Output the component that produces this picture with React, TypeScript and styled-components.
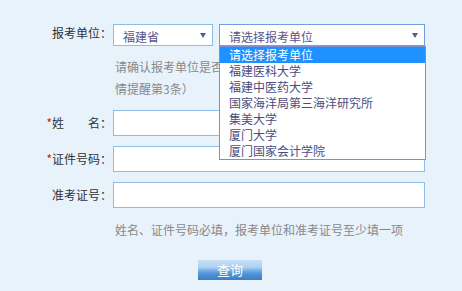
import React from "react";
import styled, { createGlobalStyle } from "styled-components";

const provinces = ["福建省"];
const units = [
  "请选择报考单位",
  "福建医科大学",
  "福建中医药大学",
  "国家海洋局第三海洋研究所",
  "集美大学",
  "厦门大学",
  "厦门国家会计学院",
];

const App = () => {
  return (
    <>
      <GlobalStyle />
      <Form>
        <Row>
          <Label>报考单位：</Label>
          <Field>
            <SelectGroup>
              <SelectBox width={100}>
                <span>{provinces[0]}</span>
                <Arrow />
              </SelectBox>
              <SelectBox width={206} focused>
                <span>{units[0]}</span>
                <Arrow />
                <DropList>
                  {units.map((u, i) => (
                    <DropItem key={u} active={i === 0}>
                      {u}
                    </DropItem>
                  ))}
                </DropList>
              </SelectBox>
            </SelectGroup>
          </Field>
        </Row>

        <HintRow>
          <Hint>
            请确认报考单位是否正确（如有疑问请查看温馨提示详
            <br />
            情提醒第3条）
          </Hint>
        </HintRow>

        <InputRow>
          <Label>
            <Star>*</Star>姓　　名：
          </Label>
          <TextInput />
        </InputRow>
        <InputRow>
          <Label>
            <Star>*</Star>证件号码：
          </Label>
          <TextInput />
        </InputRow>
        <InputRow>
          <Label>准考证号：</Label>
          <TextInput />
        </InputRow>

        <NoteRow>
          <Hint>姓名、证件号码必填，报考单位和准考证号至少填一项</Hint>
        </NoteRow>

        <ButtonRow>
          <SubmitButton>查询</SubmitButton>
        </ButtonRow>
      </Form>
    </>
  );
};

export default App;

const GlobalStyle = createGlobalStyle`
  html, body {
    margin: 0;
    padding: 0;
    background: #e8f2fb;
  }
  body {
    width: 462px;
    height: 291px;
    overflow: hidden;
    font-family: "Noto Sans CJK SC", "Liberation Sans", sans-serif;
    font-size: 12px;
  }
`;

const Form = styled.div`
  padding-top: 24px;
  display: flex;
  flex-direction: column;
`;

const Row = styled.div`
  display: grid;
  grid-template-columns: 113px 312px;
  position: relative;
  z-index: 2;
`;

const InputRow = styled(Row)`
  z-index: 1;
  margin-bottom: 10px;
  align-items: center;
`;

const Label = styled.div`
  text-align: right;
  padding-right: 1px;
  color: #333;
  line-height: 18px;
  white-space: nowrap;
  align-self: start;
  padding-top: 0;

  ${InputRow} & {
    align-self: center;
    line-height: 20px;
  }
`;

const Star = styled.span`
  color: #f00;
`;

const Field = styled.div`
  display: flex;
`;

const SelectGroup = styled.div`
  display: flex;
  gap: 6px;
`;

const SelectBox = styled.div<{ width: number; focused?: boolean }>`
  position: relative;
  box-sizing: border-box;
  width: ${(p) => p.width}px;
  height: 22px;
  background: #fff;
  border: 1px solid ${(p) => (p.focused ? "#6f9fe0" : "#8dbce9")};
  display: flex;
  align-items: center;
  justify-content: space-between;
  padding: 3px 6px 0 9px;
  color: #55558a;
  font-size: 12px;
  line-height: 16px;
`;

const Arrow = styled.i`
  display: block;
  width: 0;
  height: 0;
  margin-top: -2px;
  border-left: 3px solid transparent;
  border-right: 3px solid transparent;
  border-top: 5px solid #5a5a8c;
`;

const DropList = styled.ul`
  position: absolute;
  top: 21px;
  left: -1px;
  box-sizing: border-box;
  width: 207px;
  margin: 0;
  padding: 0;
  list-style: none;
  background: #fff;
  border: 1px solid #7c8fcf;
`;

const DropItem = styled.li<{ active?: boolean }>`
  height: 16px;
  line-height: 16px;
  padding-left: 9px;
  white-space: nowrap;
  color: ${(p) => (p.active ? "#fff" : "#4c4c80")};
  background: ${(p) => (p.active ? "#1e90ff" : "transparent")};
`;

const HintRow = styled.div`
  padding: 10px 0 10px 115px;
`;

const NoteRow = styled.div`
  padding: 1px 0 0 115px;
`;

const Hint = styled.div`
  color: #888;
  line-height: 22px;
  white-space: nowrap;
`;

const TextInput = styled.input`
  box-sizing: border-box;
  width: 312px;
  height: 26px;
  margin: 0;
  border: 1px solid #8dbce9;
  background: #fff;
  outline: none;
`;

const ButtonRow = styled.div`
  display: flex;
  justify-content: center;
  padding: 19px 2px 0 0;
`;

const SubmitButton = styled.button`
  width: 64px;
  height: 20px;
  padding: 0;
  border: none;
  color: #fff;
  font-family: inherit;
  font-size: 13px;
  line-height: 20px;
  background: linear-gradient(
    to bottom,
    #c8e1f6 0%,
    #afd2f1 35%,
    #7fb4e6 50%,
    #4f92d6 70%,
    #3a7fc8 100%
  );
`;
